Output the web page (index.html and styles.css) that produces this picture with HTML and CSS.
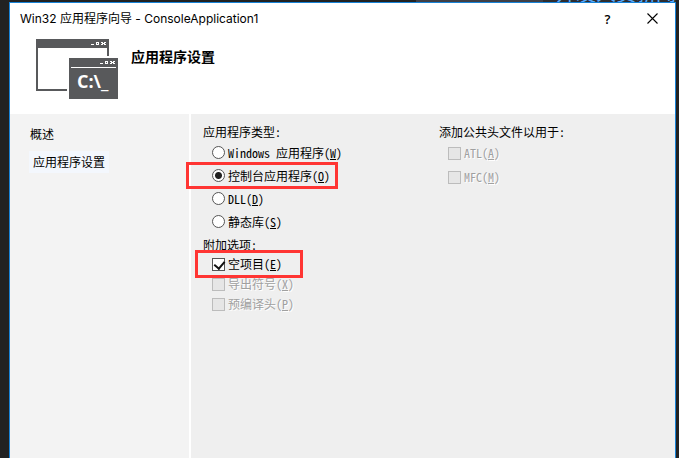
FILE: index.html
```html
<!DOCTYPE html>
<html lang="zh-CN">
<head>
  <meta charset="UTF-8" />
  <meta name="viewport" content="width=device-width, initial-scale=1.0" />
  <title>Win32 应用程序向导 - ConsoleApplication1</title>
  <link rel="stylesheet" href="styles.css">
</head>
<body>

  <div class="backdrop"><span>开发人员新闻</span></div>

  <div class="window">
    <header class="titlebar">
      <span class="title">Win32 应用程序向导 - ConsoleApplication1</span>
      <button class="caption-btn" type="button" aria-label="帮助">?</button>
      <button class="caption-btn" type="button" aria-label="关闭">
        <svg width="11" height="11" viewBox="0 0 11 11"><path d="M.5.5l10 10M10.5.5l-10 10" stroke="#000" stroke-width="1.1" /></svg>
      </button>
    </header>

    <div class="banner">
      <svg class="logo" width="82" height="60" viewBox="0 0 82 60">
        <!-- back window -->
        <path d="M0 0h73v17h-2V9H2v41h29v2H0z" fill="#58595b" />
        <path d="M55 5h3v1h-3zM60 3h3v3h-3zM61 4v1h1V4z" fill="#fff" fill-rule="evenodd" />
        <path d="M65 3h2v1h1V3h2v1h-1v1h1v1h-2V5h-1v1h-2V5h1V4h-1z" fill="#fff" />
        <!-- console window -->
        <path d="M33 19h49v41H33z" fill="#58595b" />
        <path d="M35 28h45v1H35zM64 24h3v1h-3zM69 22h3v3h-3zM70 23v1h1v-1z" fill="#fff" fill-rule="evenodd" />
        <path d="M74 22h2v1h1v-1h2v1h-1v1h1v1h-2v-1h-1v1h-2v-1h1v-1h-1z" fill="#fff" />
        <text x="41" y="49" class="prompt">C:\_</text>
      </svg>
      <h1>应用程序设置</h1>
    </div>

    <div class="content">
      <nav class="steps">
        <a href="#overview">概述</a>
        <a href="#settings" class="current">应用程序设置</a>
      </nav>

      <form class="settings">
        <div class="column">
          <fieldset class="types">
            <legend>应用程序类型:</legend>
            <label><input type="radio" name="type">Windows 应用程序(<u>W</u>)</label>
            <label class="marked"><input type="radio" name="type" checked>控制台应用程序(<u>O</u>)</label>
            <label><input type="radio" name="type">DLL(<u>D</u>)</label>
            <label><input type="radio" name="type">静态库(<u>S</u>)</label>
          </fieldset>

          <fieldset class="options">
            <legend>附加选项:</legend>
            <label class="marked"><input type="checkbox" checked>空项目(<u>E</u>)</label>
            <label class="disabled"><input type="checkbox" disabled>导出符号(<u>X</u>)</label>
            <label class="disabled"><input type="checkbox" disabled>预编译头(<u>P</u>)</label>
          </fieldset>
        </div>

        <div class="column">
          <fieldset class="headers">
            <legend>添加公共头文件以用于:</legend>
            <label class="disabled"><input type="checkbox" disabled>ATL(<u>A</u>)</label>
            <label class="disabled"><input type="checkbox" disabled>MFC(<u>M</u>)</label>
          </fieldset>
        </div>
      </form>
    </div>
  </div>

</body>
</html>
```

FILE: styles.css
```css
* {
  box-sizing: border-box;
}

body {
  margin: 0;
  padding: 0 3px 0 9px;
  min-height: 100vh;
  display: flex;
  flex-direction: column;
  background: #222;
  color: #000;
  font-family: "Noto Sans CJK SC", sans-serif;
  font-size: 12px;
  line-height: 16px;
}

/* bottom edge of the page behind the dialog */
.backdrop {
  height: 2px;
  overflow: hidden;
  display: flex;
  align-items: flex-end;
  justify-content: flex-end;
  background: linear-gradient(90deg, #222 61%, #3f3f46 61%, #3f3f46 80%, #2d2d30 80%);
  color: #55aaff;
  font-size: 20px;
  line-height: 18px;
}

.window {
  flex: 1;
  display: flex;
  flex-direction: column;
  background: #fff;
  border: 1px solid #1883d7;
  border-bottom: none;
}

.titlebar {
  display: flex;
  align-items: center;
  height: 31px;
  padding-left: 10px;
}

.title {
  flex: 1;
  font-family: Inter, "Noto Sans CJK SC", sans-serif;
}

.caption-btn {
  width: 45px;
  height: 31px;
  padding: 0;
  display: flex;
  align-items: center;
  justify-content: center;
  background: none;
  border: none;
  font-family: "Open Sans", sans-serif;
  font-size: 13px;
  font-weight: 600;
}

.banner {
  display: flex;
  align-items: flex-start;
  gap: 13px;
  height: 80px;
  padding: 5px 26px;
}

.prompt {
  fill: #fff;
  font-family: "Open Sans", sans-serif;
  font-size: 18px;
  font-weight: 700;
}

h1 {
  margin: 7px 0 0;
  font-size: 14px;
  line-height: 20px;
}

.content {
  flex: 1;
  display: flex;
}

.steps {
  flex: 0 0 181px;
  display: flex;
  flex-direction: column;
  align-items: flex-start;
  gap: 6px;
  padding: 9px 19px;
  background: #f3f3f3;
  border-right: 2px solid #fff;
}

.steps a {
  padding: 3px 4px 3px 1px;
  color: #000;
  text-decoration: none;
}

.steps .current {
  padding: 3px 4px;
  background: #f3f7fd;
}

.settings {
  flex: 1;
  display: flex;
  gap: 96px;
  padding: 10px 12px;
  background: #efefef;
  font-feature-settings: "hwid";
}

.column {
  min-width: 140px;
}

fieldset {
  margin: 0;
  padding: 0 0 0 9px;
  border: none;
}

legend {
  margin-left: -9px;
  padding: 0;
}

label {
  position: relative;
  display: flex;
  align-items: center;
  width: max-content;
}

.types label {
  height: 23px;
}

.types legend,
.headers legend {
  height: 17px;
}

.options {
  margin-top: 4px;
}

.options legend {
  height: 17px;
}

.options label {
  height: 20px;
}

.headers label {
  height: 24px;
}

input {
  appearance: none;
  flex: none;
  width: 13px;
  height: 13px;
  margin: 0 3px 0 0;
  background: #fff;
  border: 1px solid #555;
}

input[type="radio"] {
  border-radius: 50%;
}

input[type="radio"]:checked {
  background: radial-gradient(circle, #222 3px, #fff 4px);
}

input[type="checkbox"]:checked::before {
  content: "";
  display: block;
  width: 5px;
  height: 8px;
  margin: 0 0 0 3px;
  border: solid #111;
  border-width: 0 2px 2px 0;
  transform: rotate(40deg);
}

input:disabled {
  background: #e6e6e6;
  border-color: #bcbcbc;
}

.disabled {
  color: #a0a0a0;
  text-shadow: 1px 1px #fff;
}

/* red highlight frames */
.marked::after {
  content: "";
  position: absolute;
  top: -2px;
  bottom: -2px;
  left: -26px;
  right: -8px;
  border: 3px solid #ff3533;
}

.options .marked::after {
  top: -4px;
  bottom: -4px;
  left: -17px;
  right: -21px;
}
```
